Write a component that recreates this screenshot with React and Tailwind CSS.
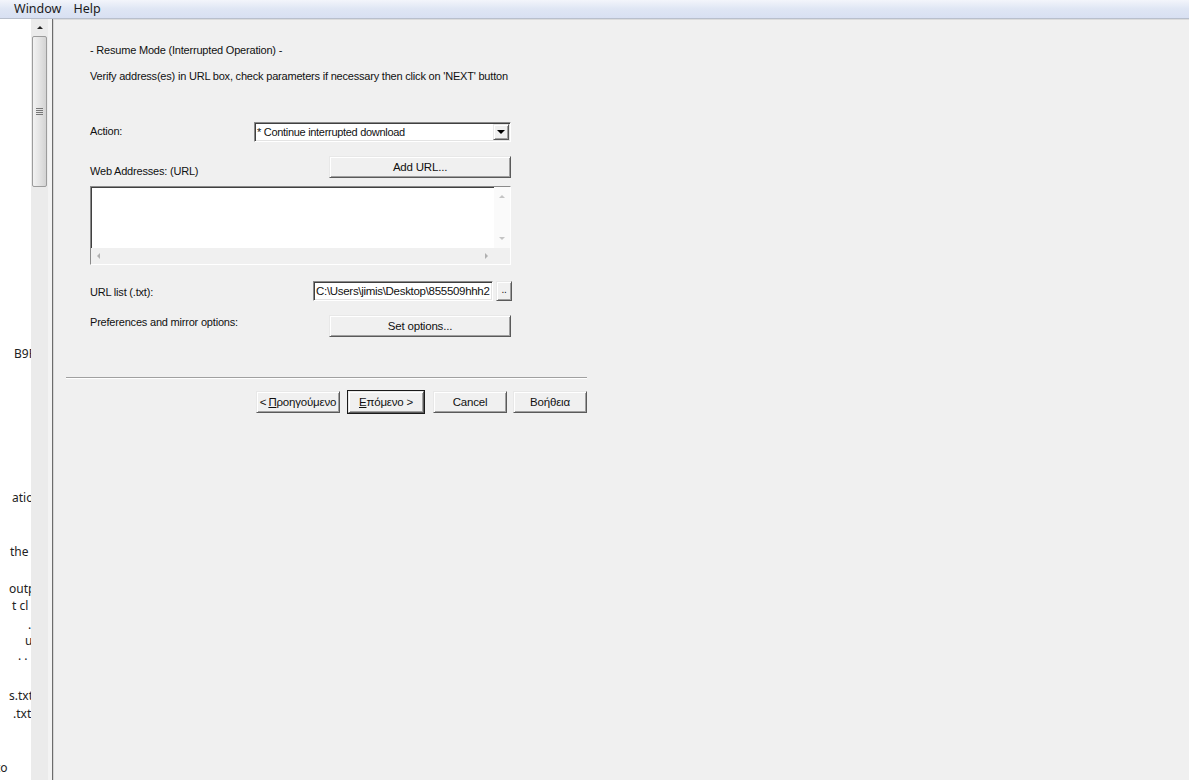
import React from 'react';

const raised =
  'border border-t-[#e8e8e8] border-l-[#e8e8e8] border-r-[#5a5a5a] border-b-[#5a5a5a] shadow-[inset_1px_1px_0_#ffffff,inset_-1px_-1px_0_#a0a0a0] bg-[#f0f0f0]';
const sunken =
  'border border-t-[#8a8a8a] border-l-[#8a8a8a] border-r-white border-b-white shadow-[inset_1px_1px_0_#404040,inset_-1px_-1px_0_#e3e3e3]';

const Tri = ({ dir = 'down', color = '#000', size = 4 }) => {
  const s = size;
  const pts = {
    down: `0,0 ${s * 2},0 ${s},${s}`,
    up: `0,${s} ${s * 2},${s} ${s},0`,
    left: `${s},0 ${s},${s * 2} 0,${s}`,
    right: `0,0 0,${s * 2} ${s},${s}`,
  }[dir];
  const w = dir === 'up' || dir === 'down' ? s * 2 : s;
  const h = dir === 'up' || dir === 'down' ? s : s * 2;
  return (
    <svg width={w} height={h} viewBox={`0 0 ${w} ${h}`}>
      <polygon points={pts} fill={color} />
    </svg>
  );
};

const Btn = ({ children, className = '', def = false }) => (
  <div
    className={`${raised} ${def ? 'outline outline-1 outline-[#1a1a1a]' : ''} flex items-center justify-center ${className}`}
  >
    {children}
  </div>
);

// left strip: clipped text of a neighbouring panel
const strip = [
  { mt: 326, x: 14, t: 'B9F' },
  { mt: 127, x: 12, t: 'atio' },
  { mt: 37, x: 10, t: 'the' },
  { mt: 20, x: 9, t: 'outp' },
  { mt: 0, x: 12, t: 't cl' },
  { mt: 2, x: 28, t: '.' },
  { mt: -1, x: 25, t: 'u' },
  { mt: -2, x: 18, t: '. . .' },
  { mt: 23, x: 9, t: 's.txt' },
  { mt: 1, x: 13, t: '.txt' },
  { mt: 37, x: -4, t: 'to' },
];

export default function App() {
  return (
    <div
      className="w-[1189px] h-[780px] overflow-hidden bg-[#f0f0f0] flex flex-col text-[#111]"
      style={{ fontFamily: '"Liberation Sans", Arial, sans-serif' }}
    >
      {/* menu bar */}
      <div
        className="h-[18px] shrink-0 flex items-center bg-gradient-to-b from-[#f3f5fb] via-[#dfe6f4] to-[#d8e0f2] text-[12.5px] text-[#1b1b1b] pl-[14px] gap-[12px]"
        style={{ fontFamily: '"Noto Sans", "Open Sans", sans-serif' }}
      >
        <span>Window</span>
        <span>Help</span>
      </div>
      <div className="h-px shrink-0 bg-[#b8bfcc]" />

      <div className="flex flex-1 min-h-0">
        {/* left clipped panel */}
        <div
          className="w-[31px] shrink-0 bg-white overflow-hidden flex flex-col text-[12px] text-[#222]"
          style={{ fontFamily: '"Noto Sans", "Open Sans", sans-serif' }}
        >
          {strip.map((r, i) => (
            <div
              key={i}
              className="h-[17px] leading-[17px] whitespace-nowrap"
              style={{ marginTop: r.mt, paddingLeft: Math.max(r.x, 0), marginLeft: Math.min(r.x, 0) }}
            >
              {r.t}
            </div>
          ))}
        </div>

        {/* left scrollbar */}
        <div className="w-[17px] shrink-0 bg-[#ebebeb] flex flex-col items-center">
          <div className="h-[17px] flex items-center justify-center">
            <Tri dir="up" size={3} color="#222" />
          </div>
          <div className="w-[15px] h-[151px] rounded-[2px] border border-[#9c9c9c] bg-gradient-to-r from-[#f2f2f2] via-[#e4e4e4] to-[#d3d3d3] flex flex-col items-center justify-center gap-[1px]">
            <div className="w-[7px] h-px bg-[#777]" />
            <div className="w-[7px] h-px bg-[#777]" />
            <div className="w-[7px] h-px bg-[#777]" />
            <div className="w-[7px] h-px bg-[#777]" />
          </div>
        </div>
        <div className="w-[4px] shrink-0 bg-[#f3f3f3]" />
        <div className="w-px shrink-0 bg-[#6c6c6c]" />
        <div className="w-px shrink-0 bg-[#d6d6d6]" />

        {/* main dialog page */}
        <div className="flex-1 flex flex-col border-t border-[#dcdcdc] text-[11px] leading-[14px] tracking-[-0.2px]">
          <div className="pl-[36px] flex flex-col">
            <div className="mt-[23px]">- Resume Mode (Interrupted Operation) -</div>
            <div className="mt-[12px]">
              Verify address(es) in URL box, check parameters if necessary then click on 'NEXT' button
            </div>

            {/* Action */}
            <div className="mt-[39px] w-[421px] flex items-center">
              <div className="flex-1 -mt-[2px]">Action:</div>
              <div className={`${sunken} w-[257px] h-[20px] bg-white flex items-center`}>
                <span className="flex-1 pl-[2px] text-[11px] tracking-[-0.3px] whitespace-nowrap">* Continue interrupted download</span>
                <div className={`${raised} w-[16px] h-[16px] mr-px flex items-center justify-center`}>
                  <Tri dir="down" size={4} />
                </div>
              </div>
            </div>

            {/* Web addresses */}
            <div className="mt-[14px] w-[421px] flex items-end">
              <div className="flex-1">Web Addresses: (URL)</div>
              <Btn className="w-[182px] h-[22px] text-[11.5px]">Add URL...</Btn>
            </div>

            <div className={`${sunken} mt-[8px] w-[421px] h-[79px] flex flex-col bg-white`}>
              <div className="flex flex-1">
                <div className="flex-1" />
                <div className="w-[16px] bg-[#fafafa] flex flex-col items-center justify-between py-[8px]">
                  <Tri dir="up" size={3} color="#c4c4c4" />
                  <Tri dir="down" size={3} color="#c4c4c4" />
                </div>
              </div>
              <div className="h-[16px] flex bg-[#f0f0f0]">
                <div className="flex-1 flex items-center justify-between px-[6px]">
                  <Tri dir="left" size={3} color="#b0b0b0" />
                  <Tri dir="right" size={3} color="#b0b0b0" />
                </div>
                <div className="w-[16px] bg-[#f0f0f0]" />
              </div>
            </div>

            {/* URL list */}
            <div className="mt-[16px] w-[422px] flex items-center">
              <div className="flex-1 pt-[1px]">URL list (.txt):</div>
              <div className={`${sunken} w-[180px] h-[20px] bg-white overflow-hidden flex items-center`}>
                <span className="pl-[2px] whitespace-nowrap text-[11.5px] tracking-[-0.3px]">C:\Users\jimis\Desktop\855509hhh2</span>
              </div>
              <Btn className="ml-[3px] w-[16px] h-[20px] text-[10px] items-end pb-[3px]">..</Btn>
            </div>

            {/* Preferences */}
            <div className="mt-[14px] w-[421px] flex items-start">
              <div className="flex-1">Preferences and mirror options:</div>
              <Btn className="w-[182px] h-[22px] text-[11.5px]">Set options...</Btn>
            </div>
          </div>

          {/* separator */}
          <div className="ml-[12px] mt-[40px] w-[521px] flex flex-col">
            <div className="h-px bg-[#a0a0a0]" />
            <div className="h-px bg-white" />
          </div>

          {/* wizard buttons */}
          <div className="ml-[12px] mt-[12px] w-[521px] flex justify-end text-[11.5px]">
            <Btn className="w-[84px] h-[22px]">
              &lt; <span className="underline ml-[2px]">Π</span>ροηγούμενο
            </Btn>
            <Btn def className="ml-[8px] w-[76px] h-[22px]">
              <span className="underline">Ε</span>πόμενο &gt;
            </Btn>
            <Btn className="ml-[9px] w-[74px] h-[22px]">Cancel</Btn>
            <Btn className="ml-[6px] w-[74px] h-[22px]">Βοήθεια</Btn>
          </div>
        </div>
      </div>
    </div>
  );
}
